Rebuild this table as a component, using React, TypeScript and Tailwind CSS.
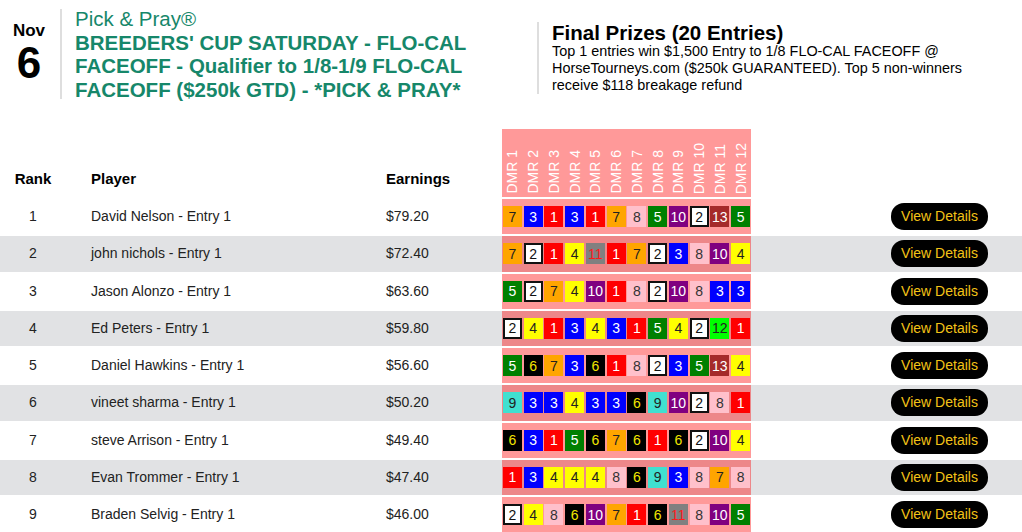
import React from "react";

const BADGE: Record<number, string> = {
  1: "bg-[#ff0000] text-white",
  2: "bg-white text-[#111] border-2 border-[#111]",
  3: "bg-[#0000ff] text-white",
  4: "bg-[#ffff00] text-[#222]",
  5: "bg-[#008000] text-white",
  6: "bg-black text-[#f2e600]",
  7: "bg-[#ffa500] text-[#222]",
  8: "bg-[#ffc0cb] text-[#333]",
  9: "bg-[#40e0d0] text-[#222]",
  10: "bg-[#800080] text-white",
  11: "bg-[#808080] text-[#ff1a1a]",
  12: "bg-[#00ff00] text-[#222]",
  13: "bg-[#a52a2a] text-white",
};

const rows = [
  { name: "David Nelson - Entry 1", earn: "$79.20", picks: [7, 3, 1, 3, 1, 7, 8, 5, 10, 2, 13, 5] },
  { name: "john nichols - Entry 1", earn: "$72.40", picks: [7, 2, 1, 4, 11, 1, 7, 2, 3, 8, 10, 4] },
  { name: "Jason Alonzo - Entry 1", earn: "$63.60", picks: [5, 2, 7, 4, 10, 1, 8, 2, 10, 8, 3, 3] },
  { name: "Ed Peters - Entry 1", earn: "$59.80", picks: [2, 4, 1, 3, 4, 3, 1, 5, 4, 2, 12, 1] },
  { name: "Daniel Hawkins - Entry 1", earn: "$56.60", picks: [5, 6, 7, 3, 6, 1, 8, 2, 3, 5, 13, 4] },
  { name: "vineet sharma - Entry 1", earn: "$50.20", picks: [9, 3, 3, 4, 3, 3, 6, 9, 10, 2, 8, 1] },
  { name: "steve Arrison - Entry 1", earn: "$49.40", picks: [6, 3, 1, 5, 6, 7, 6, 1, 6, 2, 10, 4] },
  { name: "Evan Trommer - Entry 1", earn: "$47.40", picks: [1, 3, 4, 4, 4, 8, 6, 9, 3, 8, 7, 8] },
  { name: "Braden Selvig - Entry 1", earn: "$46.00", picks: [2, 4, 8, 6, 10, 7, 1, 6, 11, 8, 10, 5] },
];

const races = Array.from({ length: 12 }, (_, i) => `DMR ${i + 1}`);

export default function App() {
  return (
    <div className="w-[1022px] h-[532px] overflow-hidden bg-white font-['Liberation_Sans',Arial,sans-serif] text-[#222]">
      {/* Header */}
      <div className="flex h-[129px]">
        <div className="flex w-[537px] self-start pt-[7px]">
          <div className="w-[62px] my-[2px] border-r-2 border-[#dedede] flex flex-col items-center pr-[2px]">
            <div className="mt-[12px] text-[17px] leading-[20px] font-bold text-black">Nov</div>
            <div className="text-[44px] leading-[44px] font-bold text-black">6</div>
          </div>
          <div className="pl-[13px] w-[450px] text-[#16876a] text-[20.5px]">
            <div className="leading-[23.5px]">Pick &amp; Pray®</div>
            <div className="leading-[23.5px] font-bold">
              BREEDERS' CUP SATURDAY - FLO-CAL FACEOFF - Qualifier to 1/8-1/9 FLO-CAL FACEOFF ($250k GTD) - *PICK &amp; PRAY*
            </div>
          </div>
        </div>
        <div className="mt-[22px] self-start border-l-2 border-[#dedede] pl-[13px] w-[450px]">
          <div className="text-[20.5px] leading-[21px] font-bold text-black">Final Prizes (20 Entries)</div>
          <div className="text-[14.4px] leading-[17px] text-black">
            Top 1 entries win $1,500 Entry to 1/8 FLO-CAL FACEOFF @ HorseTourneys.com ($250k GUARANTEED). Top 5 non-winners receive $118 breakage refund
          </div>
        </div>
      </div>

      {/* Table header */}
      <div className="flex h-[68px] items-end text-[15px] leading-[17px] font-bold text-black">
        <div className="w-[66px] text-center pb-[10px]">Rank</div>
        <div className="w-[310px] pl-[25px] pb-[10px]">Player</div>
        <div className="w-[126px] pl-[10px] pb-[10px]">Earnings</div>
        <div className="w-[249px] h-full bg-[rgba(255,0,0,0.4)] flex">
          {races.map((r) => (
            <div key={r} className="w-[20.75px] flex justify-center items-end pb-[3px]">
              <span className="[writing-mode:vertical-rl] rotate-180 text-[14px] leading-[16px] font-normal text-white whitespace-nowrap">
                {r}
              </span>
            </div>
          ))}
        </div>
      </div>

      {/* Rows */}
      {rows.map((row, i) => (
        <div
          key={i}
          className={`mt-[2px] flex items-center h-[35.25px] text-[14px] leading-[17px] ${i % 2 === 1 ? "bg-[#e1e2e4]" : "bg-white"}`}
        >
          <div className="w-[66px] text-center">{i + 1}</div>
          <div className="w-[310px] pl-[25px]">{row.name}</div>
          <div className="w-[126px] pl-[10px]">{row.earn}</div>
          <div className="w-[249px] self-stretch bg-[rgba(255,0,0,0.4)] flex items-center">
            {row.picks.map((p, j) => (
              <div key={j} className="w-[20.75px] flex justify-center">
                <div className={`w-[19px] h-[21px] flex items-center justify-center text-[14px] leading-none ${BADGE[p]}`}>
                  {p}
                </div>
              </div>
            ))}
          </div>
          <div className="pl-[140px]">
            <div className="w-[97px] h-[27px] rounded-[13px] bg-black text-[#f3c317] text-[14px] flex items-center justify-center">
              View Details
            </div>
          </div>
        </div>
      ))}
    </div>
  );
}
